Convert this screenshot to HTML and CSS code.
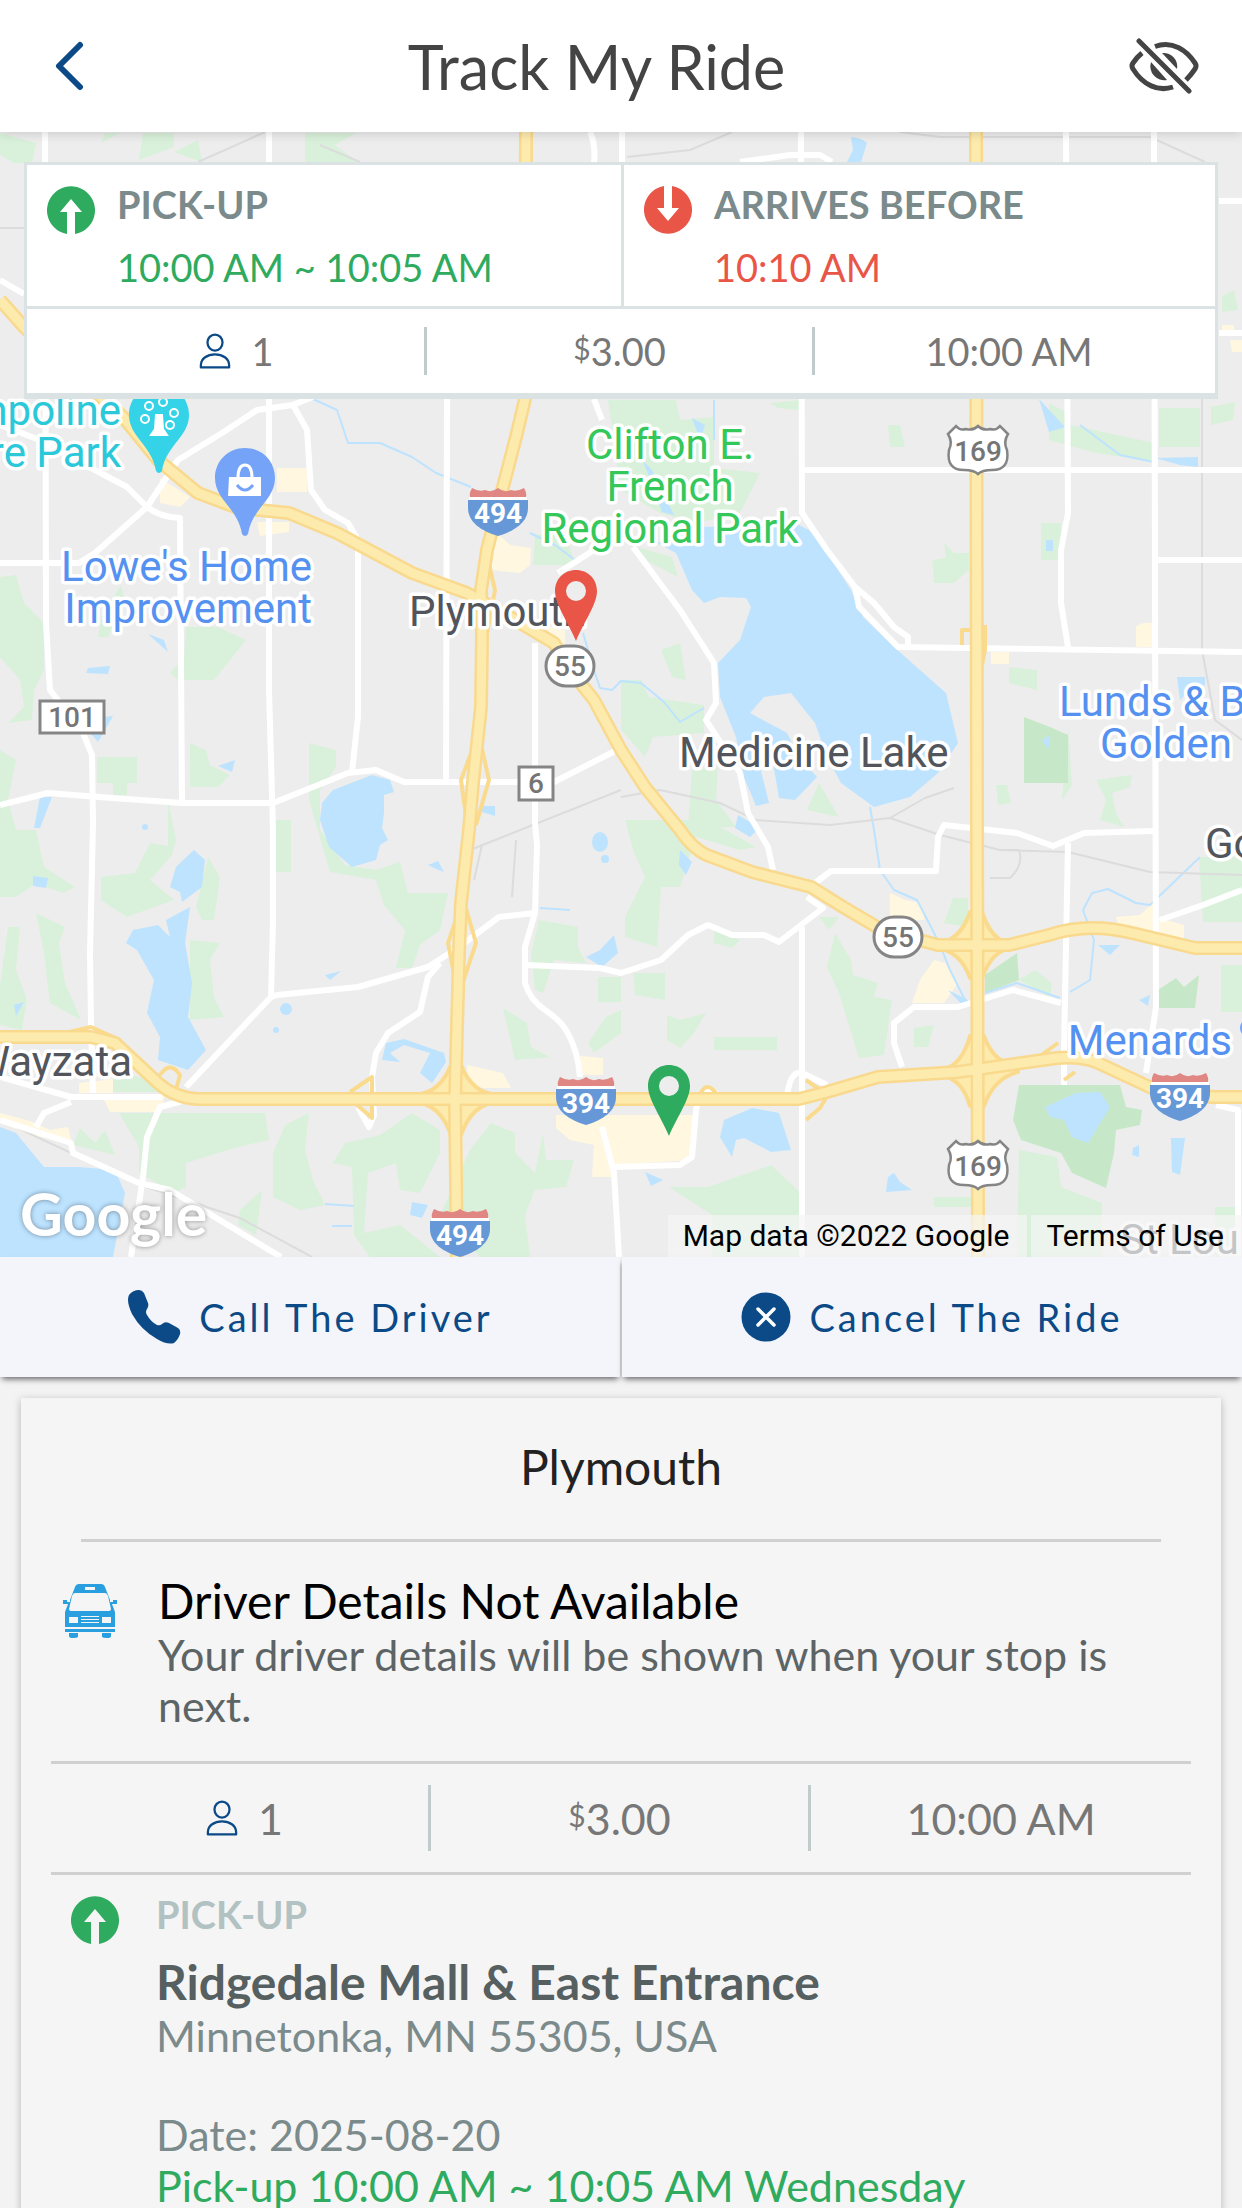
FILE: index.html
```html
<!DOCTYPE html>
<html lang="en">
<head>
    <meta charset="UTF-8">
    <meta name="viewport" content="width=device-width, initial-scale=1.0">
    <title>Track My Ride</title>
    <link rel="stylesheet" href="styles.css">
</head>

<body>
<!-- shared icons -->
<svg class="sprite" aria-hidden="true">
    <symbol id="icon-up" viewBox="0 0 48 48">
        <path fill="#2eab5e" d="M20 48A24 24 0 1 1 28 48V26H35L24 13L13 26H20Z"/>
    </symbol>
    <symbol id="icon-down" viewBox="0 0 48 48">
        <path fill="#e95648" d="M20 0A24 24 0 1 0 28 0V22H35L24 35L13 22H20Z"/>
    </symbol>
    <symbol id="icon-person" viewBox="0 0 34 38">
        <g fill="none" stroke="#0b4a86" stroke-width="2.4" stroke-linejoin="round">
            <ellipse cx="17" cy="10" rx="8" ry="8.5"/>
            <path d="M2 36.500V34C2 27 9 22.500 17 22.500S32 27 32 34V36.500Z"/>
        </g>
    </symbol>
    <symbol id="interstate" viewBox="0 0 60 48">
        <path fill="#e08683" d="M4 0Q11 4 17 2Q24 5 30 0Q36 5 43 2Q49 4 56 0Q59 5 58 9H2Q1 5 4 0Z"/>
        <path fill="#fff" d="M1 9H59V12H1Z"/>
        <path fill="#6698d8" d="M0 12H60V20C60 34 47 43 30 48C13 43 0 34 0 20Z"/>
    </symbol>
    <symbol id="us-route" viewBox="0 0 64 52">
        <path fill="#fff" stroke="#858585" stroke-width="2.500" d="M10 2Q14 7 20 5Q27 7 32 2Q37 7 44 5Q50 7 54 2L62 10Q57 18 61 26Q64 46 46 46Q36 46 32 50Q28 46 18 46Q0 46 3 26Q7 18 2 10Z"/>
    </symbol>
    <symbol id="pin" viewBox="0 0 42 71">
        <path d="M21 0C9 0 0 9 0 21C0 34 12 50 21 71C30 50 42 34 42 21C42 9 33 0 21 0ZM21 11A10 10 0 1 1 21 31A10 10 0 1 1 21 11Z"/>
    </symbol>
    <symbol id="place" viewBox="0 0 60 88">
        <path d="M30 0C13 0 0 13 0 30C0 52 23 60 27 86Q30 90 33 86C37 60 60 52 60 30C60 13 47 0 30 0Z"/>
    </symbol>
</svg>

<div class="app">
    <!-- Header -->
    <header class="header">
        <button class="header-back" aria-label="Back">
            <svg width="30" height="50" viewBox="0 0 30 50"><path d="M26 4L5 25L26 46" fill="none" stroke="#0b4a86" stroke-width="6" stroke-linecap="round" stroke-linejoin="round"/></svg>
        </button>
        <h1>Track My Ride</h1>
        <button class="header-hide" aria-label="Hide map">
            <svg width="70" height="56" viewBox="0 0 70 56">
                <g fill="none" stroke="#444" stroke-width="5" stroke-linecap="round">
                    <path d="M10 3L60 53"/>
                    <path stroke-linecap="butt" d="M26 8.500C44 2 58 13 66 25Q68 28 66 31Q62 37 57 42"/>
                    <path stroke-linecap="butt" d="M13 15Q8 19 4 25Q2 28 4 31C14 47 29 54 44 49"/>
                </g>
                <path fill="#444" d="M33 15A13.500 13.500 0 0 1 48 31ZM22 24L38 42A14 14 0 0 1 22 24Z"/>
            </svg>
        </button>
    </header>

    <!-- Map -->
    <section class="map">
        <svg class="map-canvas" viewBox="0 132 1242 1125" preserveAspectRatio="xMidYMid slice">
            <rect x="0" y="132" width="1242" height="1125" fill="#ededed"/>

            <!-- parks -->
            <g fill="#d9f1da">
                <path d="M0 133L36 143L32 163H14L0 155ZM143 133H174V147L139 160ZM198 140L202 162L174 152ZM305 133H356L335 145L358 162H305ZM105 133H120L101 143Z"/>
                <path d="M0 577L16 575L24 603L44 623V670L34 690L32 720L8 723L24 707L20 680L0 657ZM186 627H218L246 640L214 680H178L170 673L184 657ZM535 535L565 530L575 565H533Z"/>
                <path d="M97 757H137V783H127V795H113V783H97ZM190 743L206 750L210 765L230 775L218 787H190ZM121 585L125 600L108 637H98L102 615Z"/>
                <path d="M309 743L336 750V767L320 790V830L345 865L376 870L400 862L408 893L448 893L440 930L420 945L412 968H396L405 930L384 905L376 880L330 872L309 800Z"/>
                <path d="M0 750L16 760L8 800L16 830H36L44 867L75 887L63 893L36 883L16 897H0ZM101 877L135 873L150 843L168 846V800L176 840L172 855L150 880L174 900L127 917L101 900Z"/>
                <path d="M208 857L220 877L214 920H202L196 907ZM190 940L220 943L210 960L214 997L224 1017L190 1020ZM36 913L65 927L59 943L65 983L81 1020L50 1003L44 953ZM8 927L20 927L16 970L27 1000L22 1030L0 1025V985ZM275 820H291V872H275ZM113 1070L150 1080L160 1092H113Z"/>
                <path d="M119 1113H265L269 1140L238 1147L186 1163V1187L174 1193L139 1173V1147ZM73 1145L80 1128L95 1143L105 1130L115 1155ZM273 1153L285 1125L309 1113L305 1150L313 1180L325 1205L300 1210L273 1197ZM240 1210L262 1190L256 1235L238 1225Z"/>
                <path d="M333 1163L345 1143L380 1135L412 1113L440 1130V1153L420 1193L400 1190L396 1163L368 1173L364 1233L400 1225L440 1257H370L354 1235L352 1167ZM491 1123L515 1133V1153L535 1173L543 1133L546 1160H574L566 1187L535 1190L525 1215L530 1257H480L440 1215L470 1150Z"/>
                <path d="M539 920L578 927V947L586 963L554 960L543 993L535 990L531 953ZM503 1008L527 1023L531 1047L550 1057L515 1060ZM598 977H621V1002H598ZM606 1017L621 1010V1033L594 1053L588 1043Z"/>
                <path d="M625 820H708L756 847L740 850L696 837L680 887H661L657 947L625 937V917L645 877L633 850ZM621 680H641L649 697L704 705V733L653 737L645 757L621 730ZM692 770L718 767L716 800L736 827H688ZM661 650L680 643L686 680L672 677ZM819 783L839 817L807 810Z"/>
                <path d="M608 400H676L680 420L714 417V468L760 473L740 513L696 523L660 513L621 490ZM637 547L672 557L678 577L649 562ZM888 425H900L905 447H890ZM944 543L954 553L969 553V570L954 583H934L932 560L946 558ZM1041 523H1061V560H1041ZM770 403L800 400V410L778 408Z"/>
                <path d="M1049 403L1066 412V424L1154 443V462L1096 453L1049 440ZM1159 408H1200V447H1159ZM1211 407L1235 402L1233 420L1211 425ZM1009 667L1037 670V690L1009 683ZM996 785H1007L1011 803L998 805ZM1096 780L1132 775L1130 787L1112 793L1116 813L1124 827L1100 820L1106 800ZM1222 296L1234 290L1238 310L1222 312ZM1068 728L1062 800L1072 785Z"/>
                <path d="M1199 857H1242V922H1203ZM1221 965H1242V1012H1221ZM1019 980L1035 970L1052 983L1050 997ZM953 898H968V927L944 923ZM827 967L835 933L851 960L853 975L878 983L874 997L892 1000L884 1055L859 1058L839 993ZM714 930L740 940L732 948L714 943ZM819 917H839L829 930Z"/>
                <path d="M633 973H665V1000L635 995ZM667 1015L680 1020L706 1013L694 1033L680 1048L667 1040ZM714 1037H777V1050H714ZM914 1028L934 1025L928 1047H914ZM669 1187H708L771 1165L801 1193V1257H712V1215ZM934 1197H971V1207H934ZM1019 1150L1057 1157L1061 1187L1102 1203V1257H1017ZM1215 1207H1240V1257H1215Z"/>
            </g>
            <g fill="#c7e8c8">
                <path d="M1024 717L1050 727L1068 735V783H1024ZM1158 990L1176 978L1184 987L1199 975L1195 1008H1158ZM985 975L1017 953L1019 980L985 993Z"/>
                <path d="M1019 1085H1120L1126 1107L1142 1110L1140 1125L1116 1130L1114 1153L1106 1188L1072 1173L1061 1153L1021 1140L1013 1120Z"/>
            </g>

            <!-- commercial areas -->
            <path fill="#fff7e0" d="M160 478L190 497L180 507L160 503ZM277 468H307V492H277ZM257 522H289V532L260 536ZM497 533L510 545L531 548L530 565L520 573L491 570ZM540 625L565 630V643H545ZM556 1115H696L692 1160L612 1165L612 1177H592L594 1145L570 1140L556 1128ZM79 1083L113 1079V1093H79ZM0 1113L30 1121L50 1130L68 1127L72 1143L30 1135L0 1122ZM104 1100L165 1095L160 1112H110ZM890 893L905 900L920 903L925 920H890ZM934 960L945 963L958 983L944 1003H912L920 980ZM1116 917L1140 915L1156 900V930H1120ZM1156 917L1184 925V940H1156ZM1136 627Q1140 622 1154 623V647H1136ZM991 652H1009V664H991ZM467 1065L503 1073L511 1088H467ZM580 1056L603 1058V1075H583ZM1222 325H1234V333H1222ZM1230 340H1242V352H1232Z"/>

            <!-- lakes -->
            <g fill="#bde3ff">
                <path d="M799 525L809 530L827 553L851 590L863 617L894 647L946 693L958 743L938 773L910 797L874 807L841 783L827 757L815 723L791 693L764 697L750 713L787 733L799 757L817 777L795 800L779 798L773 763L760 767L769 803L756 806L744 777L736 737L720 697L718 663L740 640L751 607L746 598L720 597L704 603L692 590L676 553L657 543L696 527Z"/>
                <path d="M372 775L390 780L394 792L384 795V813L382 828L388 840L380 845L376 860L352 867L329 847L320 820L322 803L333 790Z"/>
                <path d="M194 850L205 860L202 887L182 902L180 892L170 887L176 867ZM190 907L185 943L192 983L188 1017L206 1050L188 1070L158 1060L160 1037L147 1013L154 980L137 950L126 943L133 930L158 925L170 937L166 920Z"/>
                <path d="M0 1127L16 1133L44 1167H79L115 1170L125 1193L113 1257H0Z"/>
                <path fill-rule="evenodd" d="M386 1043L404 1039L444 1053L446 1062L432 1083L420 1073L430 1053L404 1045L390 1053L400 1062L382 1060Z"/>
                <path d="M614 935L618 953L602 967L586 957L600 950ZM752 1108L779 1113L791 1150L771 1152L744 1138L736 1140L732 1157L720 1137L724 1120ZM894 1173L900 1182L912 1190L886 1192L888 1177ZM645 1172L663 1180L651 1186ZM1045 1107L1076 1093L1100 1092L1110 1107L1088 1143L1072 1137L1064 1120L1050 1117ZM1171 1138H1185L1180 1175L1172 1172Z"/>
                <path d="M851 137Q862 138 867 143L861 162H847L853 150ZM1039 399L1065 427L1049 432ZM148 634L164 640L168 652ZM88 668L110 666L108 674L86 673ZM94 718L113 716L98 742L92 735ZM218 766L235 760L232 772ZM40 797H52L40 828H34ZM33 876L48 878L46 888L33 886ZM14 1005L24 1002L16 1016ZM325 975L341 971L330 980ZM738 815L760 828L750 837L735 828ZM680 850L692 862L686 875L679 865ZM1139 1000L1150 995L1148 1006ZM1133 1148L1139 1145L1139 1157L1132 1155ZM692 418L705 425L700 440ZM642 460L652 470L674 515L662 512L655 490ZM412 1202L428 1205L422 1218L410 1215ZM1042 740L1050 735L1048 750ZM1046 540H1053V551H1046ZM1177 677H1205V685L1190 690L1180 700ZM482 806L495 806V816L482 812ZM428 865L438 861L444 872L434 868ZM1155 458L1198 457V467L1180 465ZM948 990L968 1000L965 1008ZM1098 945H1120L1110 955Z"/>
                <ellipse cx="600" cy="842" rx="8" ry="10"/>
                <circle cx="605" cy="859" r="4"/>
                <circle cx="286" cy="1009" r="6"/>
                <circle cx="276" cy="1030" r="3"/>
                <circle cx="145" cy="827" r="3"/>
            </g>
            <g class="stream">
                <path d="M313 399L337 410L348 443H380L412 457L436 473L471 487M530 533L555 545L575 560M583 633L594 670L600 688L612 690L621 681L641 683L664 702L680 722L704 708M870 807L874 830L880 870L894 890L917 900L930 925L940 945L950 970L965 1000M1080 425L1100 440L1120 455L1154 462M1200 857L1150 905L1136 903L1108 889L1092 893L1083 910L1094 940L1090 980L1070 992M985 993L1017 983L1060 998M714 400V440M325 1204L354 1206M332 1226H352M540 908L570 910"/>
            </g>

            <!-- rail lines -->
            <g class="rail">
                <path d="M198 162L265 132M320 145L360 162M627 157L690 150L732 132M900 132L940 137H1150L1205 162M0 228H24M0 1120L140 1185L240 1218L312 1257M621 797L660 790L720 803L756 820L830 825L890 818L940 835L1000 850L1068 852L1150 872L1242 875M470 850L621 790M474 880L482 845M512 897L516 840M1202 399V650L1215 720L1242 740M990 878H1010Q1024 865 1019 850H1000M890 818L925 798L954 788"/>
            </g>

            <!-- local roads -->
            <g class="road">
                <path d="M45 132L46 623L50 690L83 733L92 755L93 823L90 953L91 1023L93 1093"/>
                <path d="M269 132V690L273 830V920L271 997L186 1087"/>
                <path d="M271 997L277 995L358 987L428 967L459 947L499 917L535 913"/>
                <path d="M0 563H79L95 553L147 507L178 460L222 433L257 410L293 405L317 395"/>
                <path d="M293 405L307 430L311 490L325 510L348 523L358 540V717L352 772M447 398L446 780"/>
                <path d="M0 425L40 440L95 470L127 487L147 507Q160 517 180 518L182 803"/>
                <path d="M0 805L48 793L99 797L182 803H273L348 773L376 770L404 782H554L621 748"/>
                <path d="M535 643V823L537 845L535 913L525 947V983Q530 1000 545 1010T566 1030Q578 1050 580 1077"/>
                <path d="M525 965L600 968L621 973L661 960L688 935L708 925L732 935H764L779 942L823 908L807 897"/>
                <path d="M815 883L831 871H936L938 837L944 825L1017 833L1053 846L1084 833L1154 831"/>
                <path d="M801 132L802 513L827 550L855 587L859 607L898 647L1242 652M855 587L874 603L894 627L908 637V647"/>
                <path d="M558 573L594 550L602 520M633 547L680 610L714 663L716 703L706 720L740 773L748 813L768 847L773 870"/>
                <path d="M803 470H1242M1066 132L1068 513L1061 550V603L1068 647M1068 843L1064 1050V1085"/>
                <path d="M1154 132L1156 1007L1146 1073M1156 560H1242M802 927V1257M740 162L790 155H820L832 162"/>
                <path d="M590 132Q596 145 594 162M594 399L602 420M622 132V162M1219 201H1242M1219 333H1242M0 280L24 294"/>
                <path d="M612 1167L680 1165L692 1157L696 1110Q702 1080 718 1095M902 1067L894 1043V1023L914 1007H958L1013 990L1061 1003"/>
                <path d="M1160 920L1203 905L1242 890M1216 1105L1238 1110V1257M787 1097Q790 1070 802 1073L827 1085"/>
                <path d="M358 1107L369 1127L374 1115L372 1077L376 1053L388 1033L420 1012L428 977L440 963"/>
                <path d="M0 1077L71 1097H162M71 1102L44 1113L36 1127M0 1120L71 1143L73 1153L139 1183L170 1190L281 1257"/>
                <path d="M186 1100L160 1107L147 1137L143 1177L131 1257M602 1127L614 1173L619 1257"/>
            </g>

            <!-- interchanges -->
            <g class="ramp">
                <path fill="#fdebae" d="M451 1065Q440 1093 415 1095V1102Q440 1104 451 1135H461Q472 1104 497 1102V1095Q472 1093 461 1065Z"/>
                <path fill="#fdebae" d="M970 912Q960 942 935 944V948Q960 950 970 978H982Q992 950 1012 948V944Q992 942 982 912Z"/>
                <path fill="#fdebae" d="M970 1036Q962 1066 940 1071V1075Q962 1078 970 1106H984Q994 1078 1018 1072V1066Q994 1064 984 1036Z"/>
                <path d="M476 740L461 780L468 830M480 740L489 780L476 825M461 905L448 943L456 985M465 905L476 943L462 985M487 545L476 600M488 560L495 590L482 660"/>
                <path d="M65 1033L91 1027L120 1040M160 1075Q170 1060 180 1075L176 1090M350 1092L372 1077V1118L355 1103M700 1095Q706 1080 716 1093M806 1080L820 1090M806 1120L820 1108L826 1098M1040 1056L1058 1043M1064 1080L1075 1072M970 630H962V645M985 625V650L982 665"/>
            </g>
            <!-- highways -->
            <g class="highway-edge">
                <path id="hwy55" d="M0 300L24 327L123 417L158 460L198 493L238 508L289 513L337 533L412 573L467 593L515 620L554 643L570 670L594 700L621 750L645 787L680 830Q695 852 712 857L752 872L811 887L843 907L882 930L938 945H1009L1049 935Q1088 922 1132 933L1195 948H1242"/>
                <path id="hwy494" d="M526 132L525 399L517 433L503 487L487 550L481 590L482 637L481 707L473 783L469 830L461 903L459 953L457 1027L455 1103L457 1257"/>
                <path id="hwy394" d="M0 1037H91L115 1043L158 1083Q175 1098 198 1099H799L827 1092L878 1077L958 1072L1057 1058Q1080 1056 1096 1062L1156 1090Q1180 1098 1242 1097"/>
                <path id="hwy169" d="M976 132L977 800L978 1257"/>
            </g>
            <g class="highway">
                <use href="#hwy55"/>
                <use href="#hwy494"/>
                <use href="#hwy394"/>
                <use href="#hwy169"/>
            </g>

            <!-- route shields -->
            <g class="shield-interstate">
                <use href="#interstate" x="468" y="488" width="60" height="48"/><text x="498" y="523">494</text>
                <use href="#interstate" x="556" y="1077" width="60" height="48"/><text x="586" y="1113">394</text>
                <use href="#interstate" x="430" y="1209" width="60" height="48"/><text x="460" y="1245">494</text>
                <use href="#interstate" x="1150" y="1073" width="60" height="48"/><text x="1180" y="1108">394</text>
            </g>
            <g class="shield">
                <use href="#us-route" x="946" y="424" width="64" height="52"/><text x="978" y="461">169</text>
                <use href="#us-route" x="946" y="1139" width="64" height="52"/><text x="978" y="1176">169</text>
                <rect x="546" y="646" width="48" height="40" rx="20"/><text x="570" y="676">55</text>
                <rect x="874" y="917" width="48" height="40" rx="20"/><text x="898" y="947">55</text>
                <rect x="40" y="701" width="64" height="32"/><text x="72" y="727">101</text>
                <rect x="519" y="767" width="34" height="33"/><text x="536" y="793">6</text>
            </g>

            <!-- places -->
            <use href="#place" x="129" y="385" width="60" height="88" fill="#35d3e8"/>
            <g fill="none" stroke="#fff" stroke-width="2">
                <circle cx="149" cy="406" r="4"/>
                <circle cx="163" cy="402" r="4"/>
                <circle cx="174" cy="413" r="4"/>
                <circle cx="145" cy="419" r="4"/>
                <circle cx="170" cy="425" r="4"/>
                <path fill="#fff" d="M156 415H162L163 429L167 435H151L155 429Z"/>
            </g>
            <use href="#place" x="215" y="448" width="60" height="88" fill="#74a3f8"/>
            <path fill="#fff" d="M229 477H261V496H228Z"/>
            <path d="M238 478Q238 465 245 465T252 478" fill="none" stroke="#fff" stroke-width="3"/>
            <path d="M237 485Q245 495 253 485" fill="none" stroke="#74a3f8" stroke-width="3"/>

            <g class="label teal end">
                <text x="121" y="425">mpoline</text>
                <text x="121" y="467">re Park</text>
            </g>
            <g class="label blue end">
                <text x="312" y="581">Lowe's Home</text>
                <text x="312" y="623">Improvement</text>
                <text x="1232" y="758">Golden</text>
                <text x="1232" y="1055">Menards</text>
            </g>
            <g class="label blue">
                <text x="1059" y="716">Lunds &amp; B</text>
            </g>
            <circle cx="1250" cy="1028" r="10" fill="#74a3f8"/>
            <g class="label green middle">
                <text x="670" y="459">Clifton E.</text>
                <text x="670" y="501">French</text>
                <text x="670" y="543">Regional Park</text>
            </g>
            <g class="label">
                <text x="409" y="626">Plymouth</text>
                <text x="679" y="767">Medicine Lake</text>
                <text x="1205" y="858">Go</text>
                <text x="1120" y="1254">St Lou</text>
            </g>
            <g class="label end">
                <text x="132" y="1076">Wayzata</text>
            </g>

            <!-- stops -->
            <circle cx="576" cy="591" r="11" fill="#ededed"/>
            <use href="#pin" x="555" y="570" width="42" height="71" fill="#e95648"/>
            <circle cx="669" cy="1086" r="11" fill="#ededed"/>
            <use href="#pin" x="648" y="1065" width="42" height="71" fill="#2eab5e"/>
        </svg>

        <div class="summary">
            <div class="summary-top">
                <div class="summary-stop">
                    <svg class="stop-icon"><use href="#icon-up"/></svg>
                    <div>
                        <h2>PICK-UP</h2>
                        <p class="pickup">10:00 AM ~ 10:05 AM</p>
                    </div>
                </div>
                <div class="summary-stop">
                    <svg class="stop-icon"><use href="#icon-down"/></svg>
                    <div>
                        <h2>ARRIVES BEFORE</h2>
                        <p class="dropoff">10:10 AM</p>
                    </div>
                </div>
            </div>
            <div class="stats">
                <div class="stat"><svg class="person"><use href="#icon-person"/></svg>1</div>
                <div class="stat"><span class="currency">$</span>3.00</div>
                <div class="stat">10:00 AM</div>
            </div>
        </div>

        <div class="map-logo">Google</div>
        <div class="map-credits">
            <span>Map data ©2022 Google</span>
            <a href="#terms">Terms of Use</a>
        </div>
    </section>

    <!-- Actions -->
    <div class="actions">
        <button>
            <svg width="54" height="54" viewBox="0 0 54 54"><path fill="#0b4a86" d="M2 5Q6 0 12 0Q15 0 17 3L21 13Q22 16 20 19Q18 22 20 25Q24 32 30 35Q33 36 35 34Q38 31 42 33L51 38Q54 40 53 44Q51 50 47 53Q40 55 30 49Q14 40 5 24Q-1 11 2 5Z"/></svg>
            Call The Driver
        </button>
        <button>
            <svg width="50" height="50" viewBox="0 0 50 50"><circle cx="25" cy="25" r="24.500" fill="#0b4a86"/><path d="M17 17L33 33M33 17L17 33" stroke="#fff" stroke-width="3.500" stroke-linecap="round"/></svg>
            Cancel The Ride
        </button>
    </div>

    <!-- Ride details -->
    <main class="ride">
        <h2 class="ride-city">Plymouth</h2>

        <section class="driver">
            <svg width="54" height="54" viewBox="0 0 54 54">
                <path fill="#2a9fe0" fill-rule="evenodd" d="M16 0H38Q41 0 42 3L47 16V18H50V16H54V20H49L52 28V43H2V28L5 20H0V16H4V18H7V16L12 3Q13 0 16 0ZM22 3V6H32V3ZM12 9Q10 9 9 12L6 25Q6 27 8 27H46Q48 27 48 25L45 12Q44 9 42 9ZM6 33V39H15V33ZM39 33V39H48V33ZM18 32V33H36V32ZM18 35V36H36V35ZM18 38V39H36V38Z"/>
                <path fill="#2a9fe0" d="M2 45H52V48H2ZM6 49H15V53Q14 54 10 54Q6 54 6 52ZM39 49H48V52Q48 54 44 54Q40 54 39 53Z"/>
            </svg>
            <div>
                <h3>Driver Details Not Available</h3>
                <p>Your driver details will be shown when your stop is next.</p>
            </div>
        </section>

        <div class="stats">
            <div class="stat"><svg class="person"><use href="#icon-person"/></svg>1</div>
            <div class="stat"><span class="currency">$</span>3.00</div>
            <div class="stat">10:00 AM</div>
        </div>

        <section class="stop">
            <svg class="stop-icon"><use href="#icon-up"/></svg>
            <div>
                <h4>PICK-UP</h4>
                <h3>Ridgedale Mall &amp; East Entrance</h3>
                <p>Minnetonka, MN 55305, USA</p>
                <p class="stop-date">Date: 2025-08-20</p>
                <p class="pickup">Pick-up 10:00 AM ~ 10:05 AM Wednesday</p>
            </div>
        </section>
    </main>
</div>
</body>
</html>
```
FILE: styles.css
```css
/* ====== Base Styles ====== */
* {
    box-sizing: border-box;
    margin: 0;
    padding: 0;
}

body {
    font-family: Lato, sans-serif;
    color: #7b8a8b;
    background-color: #f3f3f3;
}

button {
    font: inherit;
    border: none;
    background: none;
    cursor: pointer;
}

svg {
    display: block;
    flex: none;
}

.sprite {
    position: absolute;
    width: 0;
    height: 0;
}

.app {
    display: flex;
    flex-direction: column;
    height: 100vh;
    overflow: hidden;
}

.pickup {
    color: #2eab5e;
}

.dropoff {
    color: #e95648;
}

.stop-icon {
    width: 48px;
    height: 48px;
}

/* ====== Header ====== */
.header {
    display: flex;
    align-items: center;
    flex: none;
    height: 132px;
    padding: 0 43px 0 54px;
    background-color: #fff;
    box-shadow: 0 2px 10px rgba(0, 0, 0, 0.15);
    position: relative;
    z-index: 2;
}

.header h1 {
    flex: 1;
    font-size: 61px;
    font-weight: 400;
    text-align: center;
    color: #444;
}

.header-hide {
    margin-left: 20px;
}

/* ====== Map ====== */
.map {
    position: relative;
    flex: none;
    aspect-ratio: 1242 / 1125;
    overflow: hidden;
    font-family: Roboto, sans-serif;
}

.map-canvas {
    width: 100%;
    height: 100%;
}

.stream,
.rail,
.road,
.ramp,
.highway-edge {
    fill: none;
    stroke-linejoin: round;
}

.stream {
    stroke: #bde3ff;
    stroke-width: 2;
}

.rail {
    stroke: #dcdcdc;
    stroke-width: 2;
}

.road {
    stroke: #fff;
    stroke-width: 6;
}

.ramp {
    stroke: #fadb8e;
    stroke-width: 4;
}

.highway-edge {
    stroke: #f9d98d;
    stroke-width: 14;
}

/* the centre line is drawn from the same paths, so it sets its own stroke */
.highway {
    fill: none;
    stroke: #fdebae;
    stroke-width: 9;
}

.shield {
    fill: #fff;
    stroke: #858585;
    stroke-width: 3;
}

.shield text,
.shield-interstate text {
    font-size: 28px;
    font-weight: 500;
    text-anchor: middle;
    stroke: none;
}

.shield text {
    fill: #757575;
}

.shield-interstate text {
    font-weight: 700;
    fill: #fff;
}

.label {
    font-size: 42px;
    fill: #52565c;
    stroke: #fff;
    stroke-width: 7;
    stroke-linejoin: round;
    paint-order: stroke;
}

.label.blue {
    fill: #5491f0;
}

.label.green {
    fill: #34c75a;
}

.label.teal {
    fill: #2bc8da;
}

.label.end {
    text-anchor: end;
}

.label.middle {
    text-anchor: middle;
}

.map-logo {
    position: absolute;
    left: 20px;
    bottom: 8px;
    font-family: Lato, sans-serif;
    font-size: 59px;
    font-weight: 700;
    color: #fff;
    text-shadow: 0 0 5px rgba(0, 0, 0, 0.4);
}

.map-credits {
    position: absolute;
    right: 0;
    bottom: 0;
    display: flex;
    gap: 4px;
    font-size: 30px;
    line-height: 42px;
}

.map-credits span,
.map-credits a {
    padding: 0 18px 0 15px;
    color: #000;
    text-decoration: none;
    background-color: rgba(245, 245, 245, 0.7);
}

/* ====== Trip summary over the map ====== */
.summary {
    position: absolute;
    top: 30px;
    left: 24px;
    right: 24px;
    background-color: #fff;
    border: 3px solid #dae2e4;
    border-bottom-width: 6px;
    font-family: Lato, sans-serif;
    font-size: 38px;
}

.summary-top {
    display: grid;
    grid-template-columns: 1fr 1fr;
    border-bottom: 3px solid #dae2e4;
}

.summary-stop {
    display: flex;
    gap: 22px;
    height: 141px;
    padding: 21px 20px 0;
}

.summary-stop:last-child {
    border-left: 3px solid #dae2e4;
}

.summary-stop h2 {
    font-size: 38px;
    line-height: 36px;
}

.summary-stop p {
    margin-top: 21px;
    line-height: 48px;
}

/* ====== Stats ====== */
.stats {
    display: grid;
    grid-template-columns: repeat(3, 1fr);
    padding: 18px 12px;
    color: #777;
}

.stat {
    display: flex;
    align-items: center;
    justify-content: center;
    height: 48px;
}

.stat:not(:last-child) {
    border-right: 3px solid #c2cbcc;
}

.person {
    width: 32px;
    height: 36px;
    margin: 0 20px 0 10px;
}

.currency {
    font-size: 30px;
    margin-bottom: 6px;
}

/* ====== Actions ====== */
.actions {
    display: grid;
    grid-template-columns: 1fr 1fr;
    gap: 2px;
    flex: none;
    position: relative;
    z-index: 1;
}

.actions button {
    display: flex;
    align-items: center;
    justify-content: center;
    gap: 18px;
    height: 120px;
    font-size: 38px;
    letter-spacing: 3px;
    color: #0b4a86;
    background-color: #f3f5fa;
    box-shadow: 0 4px 6px -2px rgba(0, 0, 0, 0.6);
}

/* ====== Ride details ====== */
.ride {
    margin: 21px 21px 0;
    padding: 0 30px;
    background-color: #f5f5f5;
    box-shadow: 0 2px 8px rgba(0, 0, 0, 0.25);
    font-size: 43px;
    line-height: 51px;
}

.ride-city {
    margin: 0 30px;
    padding: 36px 0 39px;
    border-bottom: 3px solid #d0d0d0;
    font-size: 48px;
    font-weight: 400;
    line-height: 66px;
    text-align: center;
    color: #222;
}

.driver,
.stop {
    display: flex;
}

.driver {
    gap: 41px;
    padding: 31px 40px 30px 12px;
    color: #5d6465;
}

.driver svg {
    margin-top: 11px;
}

.driver h3 {
    font-size: 48px;
    font-weight: 400;
    line-height: 56px;
    color: #000;
}

.ride .stats {
    padding: 21px 0;
    border-top: 3px solid #d0d0d0;
    border-bottom: 3px solid #d0d0d0;
}

.ride .stat {
    height: 66px;
}

.stop {
    gap: 37px;
    padding: 21px 20px 40px;
}

.stop h4 {
    font-size: 38px;
    line-height: 36px;
    color: #b2c1c1;
}

.stop h3 {
    margin-top: 22px;
    font-size: 48px;
    line-height: 56px;
    color: #566061;
}

.stop-date {
    margin-top: 48px;
}
```
